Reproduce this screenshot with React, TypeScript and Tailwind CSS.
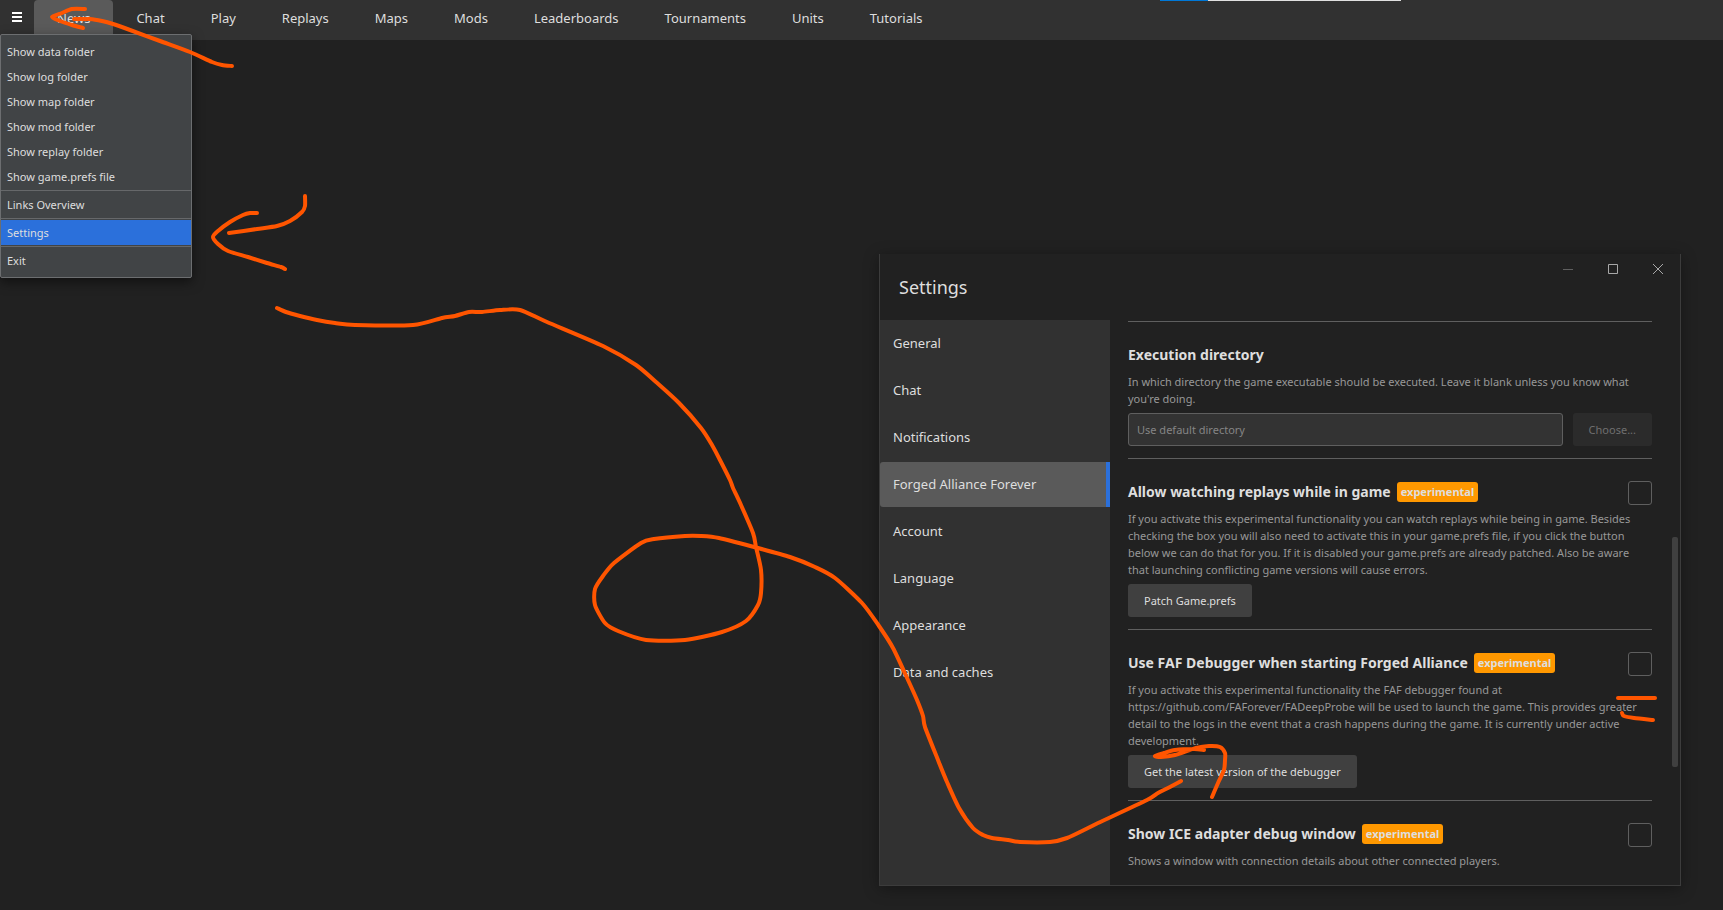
import { ReactNode } from "react";

const tabs = [
  "News",
  "Chat",
  "Play",
  "Replays",
  "Maps",
  "Mods",
  "Leaderboards",
  "Tournaments",
  "Units",
  "Tutorials",
];

const menuGroups = [
  [
    "Show data folder",
    "Show log folder",
    "Show map folder",
    "Show mod folder",
    "Show replay folder",
    "Show game.prefs file",
  ],
  ["Links Overview"],
  ["Settings"],
  ["Exit"],
];

const categories = [
  "General",
  "Chat",
  "Notifications",
  "Forged Alliance Forever",
  "Account",
  "Language",
  "Appearance",
  "Data and caches",
];

const strokes = [
  // arrow to the menu button
  "85,9 72,9 62,13 52,17 60,21 72,25 83,28",
  "74,19 90,19 102,21 113,24 130,30 160,41 190,52 212,62 222,65 232,66",
  // arrow to the settings entry
  "257,213 250,213 243,215 230,222 218,231 213,237 218,244 228,251 248,257 267,263 281,267 285,269",
  "229,233 257,229 277,226 290,221 302,212 305,206 305,196",
  // long line to the debugger button
  "277,308 286,312 300,316 317,320 335,323 355,325 413,325 442,318 455,316 469,312 482,312 500,310 520,310 547,322 603,346 636,365 656,382 679,403 701,428 712,445 721,462 730,480 733,488 741,505 753,533 756,547 761,570 761,593 758,605 746,621 722,632 685,640 646,640 618,631 605,623 595,605 595,589 603,576 614,563 641,543 654,539 685,536 701,536 719,538 754,547 790,557 815,567 835,578 862,603 879,626 893,648 908,680 917,700 923,716 925,727 938,760 947,782 959,808 973,828 983,835 992,838 1008,840 1020,842 1050,842 1067,838 1088,828 1098,823 1147,800 1158,793 1168,788 1181,781",
  "1204,750 1194,749 1175,750 1164,753 1155,756 1161,757 1175,755 1196,748 1209,746 1220,747 1225,753 1225,760 1224,770 1218,783 1212,797",
  "1618,698 1655,698",
  "1622,713 1624,716 1634,718 1653,720",
];

// Catmull-Rom spline through the points
const toPath = (stroke: string) => {
  const pts = stroke.split(" ").map((p) => p.split(",").map(Number));
  let d = `M${pts[0][0]} ${pts[0][1]}`;
  for (let i = 0; i < pts.length - 1; i++) {
    const a = pts[i - 1] || pts[i];
    const b = pts[i];
    const c = pts[i + 1];
    const e = pts[i + 2] || c;
    d += `C${b[0] + (c[0] - a[0]) / 8} ${b[1] + (c[1] - a[1]) / 8} ${
      c[0] - (e[0] - b[0]) / 8
    } ${c[1] - (e[1] - b[1]) / 8} ${c[0]} ${c[1]}`;
  }
  return d;
};

const TopBar = () => {
  return (
    <header className="flex h-10 items-start bg-[#313131]">
      <button
        aria-label="Menu"
        className="flex h-[34px] w-[34px] items-center justify-center"
      >
        <svg width="10" height="10" viewBox="0 0 10 10" fill="#fff">
          <path d="M0 0h10v2H0zM0 4h10v2H0zM0 8h10v2H0z" />
        </svg>
      </button>
      <nav className="flex">
        {tabs.map((tab) => (
          <button
            key={tab}
            className={
              tab === "News"
                ? "h-[34px] rounded-t bg-[#5a5a5a] px-[23px] pt-1 text-[13px]"
                : "h-[34px] px-[23px] pt-1 text-[13px]"
            }
          >
            {tab}
          </button>
        ))}
      </nav>
    </header>
  );
};

const MainMenu = () => {
  return (
    <div
      role="menu"
      className="absolute left-0 top-[34px] w-48 rounded-xs border border-[#6c6e70] bg-[#414446] py-1 shadow-[0_4px_12px_rgba(0,0,0,0.5)]"
    >
      {menuGroups.map((group, i) => (
        <div key={group[0]}>
          {i > 0 && <div className="my-px h-px bg-[#66686a]" />}
          {group.map((item) => (
            <button
              key={item}
              role="menuitem"
              className={
                item === "Settings"
                  ? "block h-[25px] w-full bg-[#2b70db] px-1.5 pt-0.5 text-left text-[11px]"
                  : "block h-[25px] w-full px-1.5 pt-0.5 text-left text-[11px]"
              }
            >
              {item}
            </button>
          ))}
        </div>
      ))}
    </div>
  );
};

interface ISectionProps {
  id: string;
  title: string;
  description: string;
  experimental?: boolean;
  children?: ReactNode;
}

const Section = ({
  id,
  title,
  description,
  experimental,
  children,
}: ISectionProps) => {
  return (
    <section className="border-t border-[#5f5f5f] pb-3 pt-[21px]">
      <div className="flex h-6 items-center">
        <label htmlFor={id} className="text-sm font-bold">
          {title}
        </label>
        {experimental && (
          <>
            <span className="ml-1.5 flex h-5 items-center rounded-[3px] bg-[#ff9800] px-1 text-[11px] font-bold">
              experimental
            </span>
            <input
              id={id}
              type="checkbox"
              className="ml-auto mt-0.5 size-6 appearance-none rounded-[3px] border border-[#5f5f5f]"
            />
          </>
        )}
      </div>
      <p className="mt-1.5 text-[11px] leading-[17px] text-[#989898]">
        {description}
      </p>
      {children && <div className="mt-1.5 flex gap-2.5">{children}</div>}
    </section>
  );
};

const SettingsWindow = () => {
  return (
    <div className="absolute right-[42px] top-[254px] w-[802px] border border-t-0 border-[#3c3c3c] bg-[#212121] shadow-[0_3px_14px_rgba(0,0,0,0.35)]">
      <div className="flex h-[66px] items-start justify-between">
        <h1 className="pl-[19px] pt-[19px] text-lg leading-7">Settings</h1>
        <div className="flex text-[#a8a8a8]">
          <button
            aria-label="Minimize"
            className="flex h-[30px] w-[45px] items-center justify-center text-[#5f5f5f]"
          >
            <svg width="10" height="10" viewBox="0 0 10 10" fill="none">
              <path d="M0 5.5h10" stroke="currentColor" />
            </svg>
          </button>
          <button
            aria-label="Maximize"
            className="flex h-[30px] w-[45px] items-center justify-center"
          >
            <svg width="10" height="10" viewBox="0 0 10 10" fill="none">
              <path d="M.5.5h9v9h-9z" stroke="currentColor" />
            </svg>
          </button>
          <button
            aria-label="Close"
            className="flex h-[30px] w-[45px] items-center justify-center"
          >
            <svg width="10" height="10" viewBox="0 0 10 10" fill="none">
              <path d="M0 0l10 10M10 0L0 10" stroke="currentColor" />
            </svg>
          </button>
        </div>
      </div>
      <div className="flex">
        <nav className="flex w-[230px] shrink-0 flex-col gap-0.5 bg-[#313131] pt-px">
          {categories.map((category) => (
            <button
              key={category}
              className={
                category === "Forged Alliance Forever"
                  ? "h-[45px] rounded-l-[3px] border-r-4 border-[#2b70db] bg-[#5a5a5a] pl-[13px] text-left text-[13px]"
                  : "h-[45px] pl-[13px] text-left text-[13px]"
              }
            >
              {category}
            </button>
          ))}
        </nav>
        <div className="min-w-0 flex-1 pb-1 pl-[18px] pr-5 pt-px">
          <Section
            id="execution-directory"
            title="Execution directory"
            description="In which directory the game executable should be executed. Leave it blank unless you know what you're doing."
          >
            <input
              id="execution-directory"
              type="text"
              placeholder="Use default directory"
              className="h-[33px] min-w-0 flex-1 rounded-[3px] border border-[#5f5f5f] bg-[#333] px-2 text-[11px] placeholder:text-[#858585]"
            />
            <button
              disabled
              className="h-[33px] rounded-[3px] bg-[#2b2b2b] px-4 pt-0.5 text-[11px] text-[#6f6f6f]"
            >
              Choose...
            </button>
          </Section>
          <Section
            id="watch-replays"
            title="Allow watching replays while in game"
            experimental
            description="If you activate this experimental functionality you can watch replays while being in game. Besides checking the box you will also need to activate this in your game.prefs file, if you click the button below we can do that for you. If it is disabled your game.prefs are already patched. Also be aware that launching conflicting game versions will cause errors."
          >
            <button className="h-[33px] rounded-[3px] bg-[#404040] px-4 pt-0.5 text-[11px]">
              Patch Game.prefs
            </button>
          </Section>
          <Section
            id="faf-debugger"
            title="Use FAF Debugger when starting Forged Alliance"
            experimental
            description="If you activate this experimental functionality the FAF debugger found at https://github.com/FAForever/FADeepProbe will be used to launch the game. This provides greater detail to the logs in the event that a crash happens during the game. It is currently under active development."
          >
            <button className="h-[33px] rounded-[3px] bg-[#404040] px-4 pt-0.5 text-[11px]">
              Get the latest version of the debugger
            </button>
          </Section>
          <Section
            id="ice-adapter"
            title="Show ICE adapter debug window"
            experimental
            description="Shows a window with connection details about other connected players."
          />
        </div>
        <div className="w-2 pt-[217px]">
          <div className="h-[230px] w-1.5 rounded-xs bg-[#404040]" />
        </div>
      </div>
    </div>
  );
};

const App = () => {
  return (
    <div className="relative min-h-screen overflow-hidden bg-[#212121] font-['Noto_Sans',sans-serif] text-[#dedede]">
      <TopBar />
      <div className="absolute left-[1160px] top-0 flex h-px w-[241px] bg-[#e0e0e0]">
        <div className="w-12 bg-[#0078d7]" />
      </div>
      <SettingsWindow />
      <MainMenu />
      <svg
        className="pointer-events-none absolute left-0 top-0"
        width="1723"
        height="910"
        viewBox="0 0 1723 910"
        fill="none"
        stroke="#ff5500"
        strokeWidth="4"
        strokeLinecap="round"
        strokeLinejoin="round"
      >
        {strokes.map((stroke) => (
          <path key={stroke} d={toPath(stroke)} />
        ))}
      </svg>
    </div>
  );
};

export default App;
